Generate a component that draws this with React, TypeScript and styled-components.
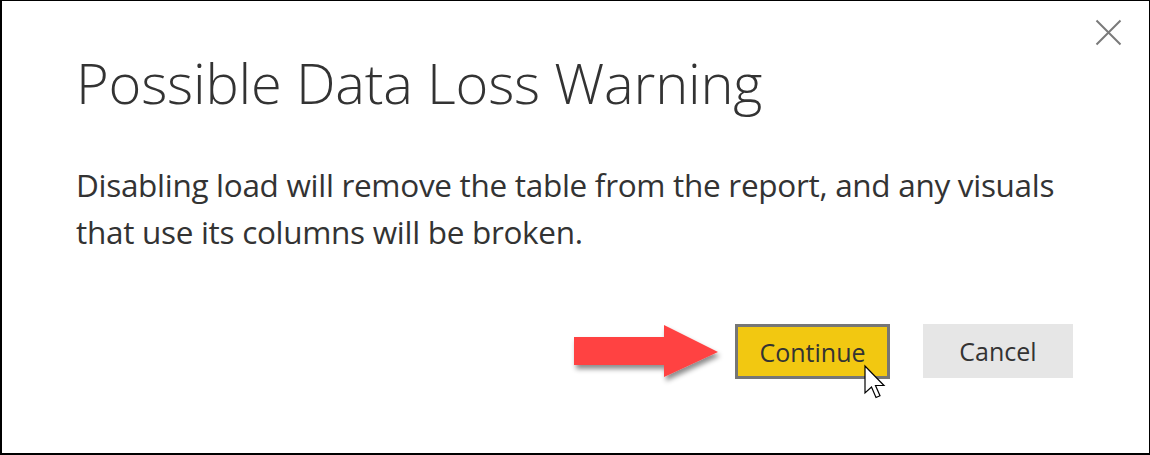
import React from "react";
import styled, { createGlobalStyle } from "styled-components";

const GlobalStyle = createGlobalStyle`
  html, body {
    margin: 0;
    padding: 0;
    background: #ffffff;
  }
  body {
    font-family: "Open Sans", "Noto Sans", "Liberation Sans", sans-serif;
  }
`;

const Dialog = styled.div`
  position: relative;
  box-sizing: border-box;
  width: 1150px;
  height: 455px;
  background: #ffffff;
  border-style: solid;
  border-color: #000000;
  border-width: 1px 1px 2px 2px;
  padding: 43px 76px 0 74px;
  display: flex;
  flex-direction: column;
`;

const CloseButton = styled.button`
  position: absolute;
  top: 18px;
  right: 27px;
  width: 27px;
  height: 27px;
  padding: 0;
  border: none;
  background: transparent;
  cursor: pointer;
  display: flex;
  align-items: center;
  justify-content: center;
`;

const Title = styled.h1`
  margin: 0;
  font-family: "Open Sans", "Noto Sans", sans-serif;
  font-weight: 300;
  font-size: 56px;
  line-height: 76px;
  color: #333333;
  letter-spacing: -0.2px;
`;

const Message = styled.p`
  margin: 41px 0 0 0;
  font-family: "Open Sans", "Noto Sans", sans-serif;
  font-weight: 400;
  font-size: 31.5px;
  line-height: 47px;
  color: #333333;
  letter-spacing: -0.3px;
  white-space: nowrap;
`;

const Footer = styled.div`
  display: flex;
  justify-content: flex-end;
  gap: 33px;
  margin-top: 69px;
`;

const ButtonWrap = styled.div`
  position: relative;
`;

const DialogButton = styled.button<{ $primary?: boolean }>`
  box-sizing: border-box;
  height: ${(p) => (p.$primary ? "55px" : "54px")};
  width: ${(p) => (p.$primary ? "155px" : "150px")};
  padding: 0;
  font-family: "Open Sans", "Noto Sans", sans-serif;
  font-size: 25px;
  font-weight: 400;
  color: #333333;
  background: ${(p) => (p.$primary ? "#F2C811" : "#E6E6E6")};
  border: ${(p) => (p.$primary ? "3px solid #767676" : "none")};
  border-radius: 0;
  cursor: pointer;
`;

const RedArrow = styled.svg`
  position: absolute;
  left: -163px;
  top: 0px;
  width: 150px;
  height: 60px;
  overflow: visible;
`;

const Pointer = styled.svg`
  position: absolute;
  left: 129px;
  top: 41px;
  width: 26px;
  height: 40px;
  overflow: visible;
`;

export default function App() {
  return (
    <>
      <GlobalStyle />
      <Dialog>
        <CloseButton aria-label="Close">
          <svg width="27" height="27" viewBox="0 0 27 27">
            <path
              d="M1.5 1.5 L25.5 25.5 M25.5 1.5 L1.5 25.5"
              stroke="#7a7a7a"
              strokeWidth="2"
              fill="none"
            />
          </svg>
        </CloseButton>
        <Title>Possible Data Loss Warning</Title>
        <Message>
          Disabling load will remove the table from the report, and any visuals
          <br />
          that use its columns will be broken.
        </Message>
        <Footer>
          <ButtonWrap>
            <RedArrow viewBox="0 0 150 60">
              <defs>
                <filter id="shadow" x="-20%" y="-30%" width="140%" height="160%">
                  <feDropShadow dx="2" dy="4" stdDeviation="2.5" floodColor="#000" floodOpacity="0.45" />
                </filter>
              </defs>
              <polygon
                points="2,13 92,13 92,1 146,28 92,53 92,41 2,41"
                fill="#FF4242"
                filter="url(#shadow)"
              />
            </RedArrow>
            <DialogButton $primary>Continue</DialogButton>
            <Pointer viewBox="0 0 26 40">
              <path
                d="M1 1 L1 28 L7.5 22 L12 32.5 L16 30.8 L11.5 20.5 L20 20.5 Z"
                fill="#ffffff"
                stroke="#000000"
                strokeWidth="1.2"
                strokeLinejoin="miter"
              />
            </Pointer>
          </ButtonWrap>
          <DialogButton>Cancel</DialogButton>
        </Footer>
      </Dialog>
    </>
  );
}
